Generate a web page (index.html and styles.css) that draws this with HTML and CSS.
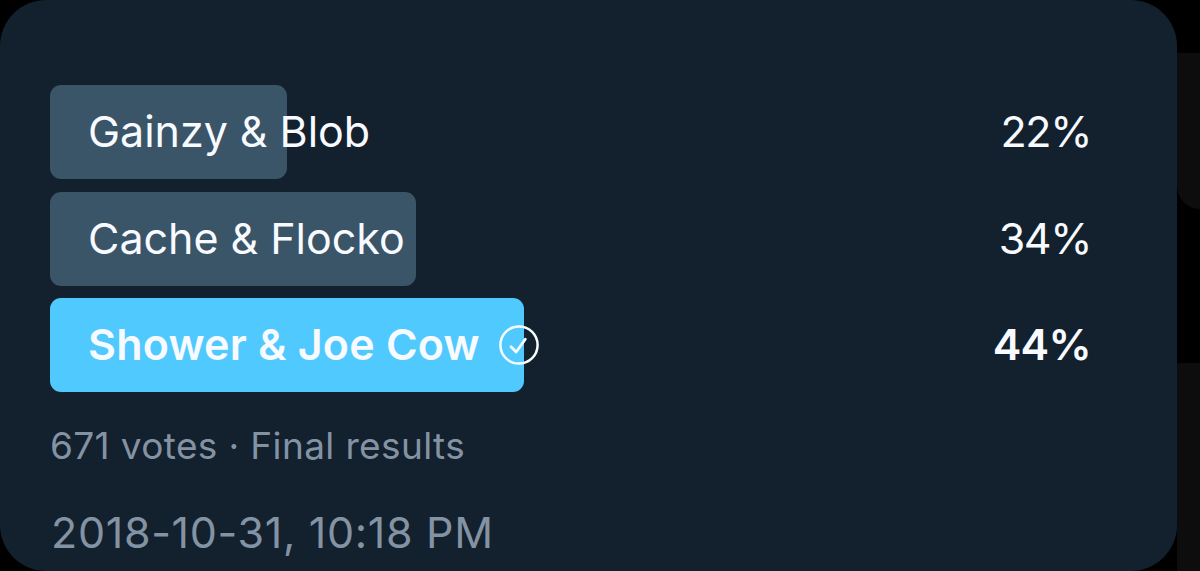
FILE: index.html
```html
<!DOCTYPE html>
<html lang="en">
<head>
<meta charset="utf-8">
<title>Poll results</title>
<link rel="stylesheet" href="styles.css">
</head>
<body>
<main class="card">
  <ul class="poll">
    <li class="option">
      <div class="bar" style="width: 237px"></div>
      <span class="label">Gainzy &amp; Blob</span>
      <span class="percent">22%</span>
    </li>
    <li class="option">
      <div class="bar" style="width: 366px"></div>
      <span class="label">Cache &amp; Flocko</span>
      <span class="percent">34%</span>
    </li>
    <li class="option winner">
      <div class="bar" style="width: 474px"></div>
      <span class="label">Shower &amp; Joe Cow
        <svg class="check" viewBox="0 0 40 40" aria-hidden="true">
          <circle cx="20" cy="20" r="18.6" stroke-width="2.5"/>
          <path d="M12 21.7 L17.2 27 L26.3 14.2" stroke-width="2.8"/>
        </svg>
      </span>
      <span class="percent">44%</span>
    </li>
  </ul>
  <p class="votes">671 votes · Final results</p>
  <p class="date">2018-10-31, 10:18 PM</p>
</main>
<aside class="backdrop">
  <div class="panel panel-top"></div>
  <div class="panel panel-bottom"></div>
</aside>
</body>
</html>
```

FILE: styles.css
```css
* { box-sizing: border-box; }

body {
  margin: 0;
  height: 571px;
  display: flex;
  overflow: hidden;
  background: #000;
  color: #f7faff;
  font-family: Inter, "Liberation Sans", sans-serif;
}

.card {
  width: 1177px;
  height: 571px;
  padding: 85px 86px 0 50px;
  background: #13202d;
  border-radius: 46px;
}

.poll {
  margin: 0;
  padding: 0;
  list-style: none;
  display: grid;
  gap: 12.7px;
}

.option {
  position: relative;
  height: 94px;
  padding-left: 38px;
  display: flex;
  align-items: flex-start;
  justify-content: space-between;
  font-size: 43px;
  line-height: 92px;
}

.bar {
  position: absolute;
  inset: 0 auto 0 0;
  background: #3a5468;
  border-radius: 11px;
}

.label {
  position: relative;
  display: flex;
  align-items: center;
  white-space: nowrap;
  letter-spacing: -0.03px;
}

.percent {
  position: relative;
  letter-spacing: -1.4px;
}

.winner { font-weight: 600; }
.winner .bar { background: #50c9fe; }
.winner .label { letter-spacing: 0.2px; }
.winner .percent { letter-spacing: -0.7px; }

.check {
  width: 40px;
  height: 40px;
  margin: 2px 0 0 19px;
  fill: none;
  stroke: #f7fcff;
  stroke-linecap: round;
  stroke-linejoin: round;
}

.votes, .date {
  margin: 0;
  color: #8493a3;
  white-space: nowrap;
}

.votes {
  margin-top: 30px;
  font-size: 37px;
  line-height: 48px;
  letter-spacing: 0.37px;
}

.date {
  margin: 34px 0 0 1px;
  font-size: 43px;
  line-height: 56px;
  letter-spacing: 0.68px;
}

.backdrop {
  flex: 1;
  display: flex;
  flex-direction: column;
  justify-content: space-between;
  padding-top: 53px;
}

.panel { background: #0d0d0d; }
.panel-top { height: 156px; border-bottom-left-radius: 26px; }
.panel-bottom { height: 208px; }
```
